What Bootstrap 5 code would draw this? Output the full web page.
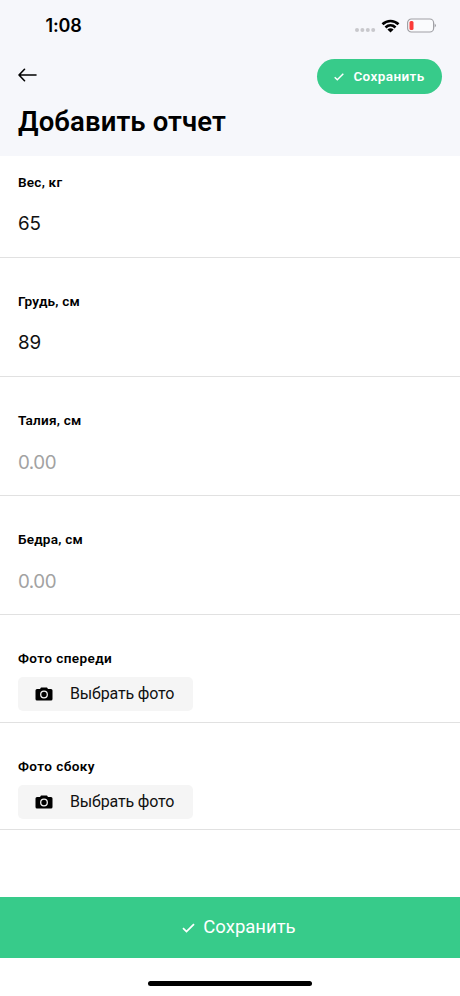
<!DOCTYPE html>
<html lang="ru">
<head>
<meta charset="utf-8">
<meta name="viewport" content="width=device-width, initial-scale=1">
<title>Добавить отчет</title>
<link href="https://cdn.jsdelivr.net/npm/bootstrap@5.3.0/dist/css/bootstrap.min.css" rel="stylesheet">
<style>
body{font-family:Roboto,"Noto Sans",sans-serif;color:#000;background:#fff;height:996px;overflow:hidden}
svg{display:block;flex:none}
.app-head{background:#f6f7fb;height:156px}
.status-bar{height:51px;padding:0 24px 0 45.5px}
.clock{font:600 18px/1 Inter,sans-serif;letter-spacing:-.15px}
.tool-bar{padding:8px 18px 0}
.back-link{margin-top:-4px}
.save-pill{width:125px;height:35px;background:#37cb8a;color:#fff;font-size:13.5px;font-weight:600;letter-spacing:.4px;line-height:1;gap:9px}
.page-title{font-size:27.5px;font-weight:600;line-height:32px;letter-spacing:.12px;margin:12px 18px 0}
.field{height:119px;padding:35px 18px 0;border-bottom:1px solid #e1e1e1}
.field-first{height:102px;padding-top:18px}
.field-photo{height:107.5px;border-bottom-width:1.5px}
.field-label{font-size:13.6px;font-weight:600;line-height:16px;letter-spacing:.2px}
.label-photo{letter-spacing:.4px}
.field-input{font:400 18.8px/26px Inter,sans-serif;letter-spacing:-.1px;color:#111;margin-top:21px;height:26px}
.field-input:placeholder-shown{margin-top:22px;letter-spacing:-.5px}
.field-input::placeholder{color:#a2a2a2;opacity:1}
.photo-btn{width:175px;height:34px;margin-top:11px;background:#f5f5f5;border-radius:5px;padding:0 17px;gap:17px;font-size:16px;line-height:1;letter-spacing:-.15px;color:#111}
.save-bar{height:61px;background:#37cb8a;color:#fff;font-size:18.5px;line-height:1;letter-spacing:0;gap:8px;padding:0 0 0 18px}
.home-bar{width:164px;height:5px;background:#000}
.home-area{height:38px;padding-top:23px}
</style>
</head>
<body class="d-flex flex-column">
<header class="app-head">
  <div class="status-bar d-flex align-items-center justify-content-between">
    <span class="clock">1:08</span>
    <div class="d-flex align-items-center">
      <svg width="22" height="6" viewBox="0 0 22 6" class="me-1 mt-2" fill="#c8c8cc"><circle cx="2" cy="3" r="2"/><circle cx="7.400" cy="3" r="2"/><circle cx="12.800" cy="3" r="2"/><circle cx="18.200" cy="3" r="2"/></svg>
      <svg width="20" height="14" viewBox="0 0 20 14"><path d="M1.500 5.300C6.200.9 12.800.9 17.500 5.300M4.500 8.400C7.500 5.600 11.500 5.600 14.500 8.400" fill="none" stroke="#000" stroke-width="2.700"/><path d="M6.400 10.500C8.300 8.900 10.700 8.900 12.600 10.500L9.500 13.500Z"/></svg>
      <svg width="31" height="15" viewBox="0 0 31 15" class="ms-1"><rect x="2.600" y="1" width="26" height="13" rx="3.800" fill="#fafbfd" stroke="#a0a0a5" stroke-width="1.200"/><rect x="4.500" y="3" width="4" height="9" rx="1.500" fill="#fb3b38"/><path d="M29.700 5.500Q32 7.500 29.700 9.500Z" fill="#98989d"/></svg>
    </div>
  </div>
  <div class="tool-bar d-flex align-items-center justify-content-between">
    <a href="#" class="back-link" aria-label="Назад"><svg width="20" height="14" viewBox="0 0 20 14" fill="none" stroke="#000" stroke-width="1.600" stroke-linecap="round" stroke-linejoin="round"><path d="M18 7H1M6.500 1.300L1 7l5.500 5.700"/></svg></a>
    <button class="save-pill btn border-0 rounded-pill p-0 d-flex align-items-center justify-content-center">
      <svg width="10" height="8" viewBox="0 0 10 8" fill="none" stroke="#fff" stroke-width="1.500"><path d="M.7 4.200L3.300 6.700 9.300.8"/></svg>Сохранить
    </button>
  </div>
  <h1 class="page-title">Добавить отчет</h1>
</header>
<main class="flex-grow-1">
  <div class="field field-first"><label class="field-label d-block" for="weight">Вес, кг</label><input id="weight" class="field-input form-control border-0 rounded-0 p-0 shadow-none" value="65"></div>
  <div class="field"><label class="field-label d-block" for="chest">Грудь, см</label><input id="chest" class="field-input form-control border-0 rounded-0 p-0 shadow-none" value="89"></div>
  <div class="field"><label class="field-label d-block" for="waist">Талия, см</label><input id="waist" class="field-input form-control border-0 rounded-0 p-0 shadow-none" placeholder="0.00"></div>
  <div class="field"><label class="field-label d-block" for="hips">Бедра, см</label><input id="hips" class="field-input form-control border-0 rounded-0 p-0 shadow-none" placeholder="0.00"></div>
  <div class="field field-photo"><div class="field-label label-photo">Фото спереди</div>
    <button class="photo-btn btn border-0 d-flex align-items-center text-nowrap"><svg width="18" height="14" viewBox="0 0 18 14"><path d="M2 2h3l1-1.500h6L13 2h3q1.500 0 1.500 1.500v8.500q0 1.500-1.500 1.500H2Q.5 13.500.5 12V3.500Q.5 2 2 2"/><circle cx="9" cy="7.500" r="3.300" fill="none" stroke="#f5f5f5" stroke-width="1.300"/></svg>Выбрать фото</button></div>
  <div class="field field-photo"><div class="field-label label-photo">Фото сбоку</div>
    <button class="photo-btn btn border-0 d-flex align-items-center text-nowrap"><svg width="18" height="14" viewBox="0 0 18 14"><path d="M2 2h3l1-1.500h6L13 2h3q1.500 0 1.500 1.500v8.500q0 1.500-1.500 1.500H2Q.5 13.500.5 12V3.500Q.5 2 2 2"/><circle cx="9" cy="7.500" r="3.300" fill="none" stroke="#f5f5f5" stroke-width="1.300"/></svg>Выбрать фото</button></div>
</main>
<button class="save-bar btn border-0 rounded-0 w-100 d-flex align-items-center justify-content-center flex-shrink-0">
  <svg width="13" height="10" viewBox="0 0 13 10" fill="none" stroke="#fff" stroke-width="1.800"><path d="M1 5.200L4.500 8.600 12 1.200"/></svg>Сохранить
</button>
<div class="home-area d-flex justify-content-center flex-shrink-0"><div class="home-bar rounded-pill"></div></div>
</body>
</html>
